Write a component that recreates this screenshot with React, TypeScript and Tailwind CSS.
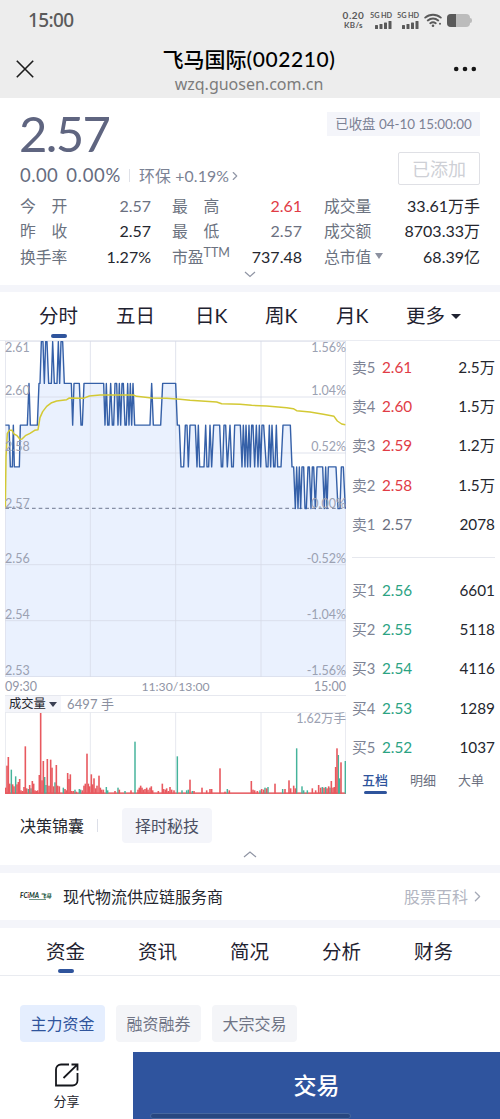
import React from 'react';
import { ChevronRight } from 'lucide-react';

// [x, level]: level 0 is the day's high (2.61), 4 is the previous close (2.57)
const PRICE: [number, number][] = [
  [16, 2], [27, 2], [31, 3], [37, 3], [40, 2], [43, 3], [58, 3], [61, 2], [82, 2], [87, 1], [91, 2], [112, 2], [117, 1], [120, 1],
  [124, 0], [129, 0], [133, 1], [137, 0], [141, 0], [146, 1], [154, 1], [158, 0], [163, 1], [171, 1], [175, 0], [179, 1], [183, 0],
  [188, 0], [193, 1], [214, 1], [218, 2], [222, 1], [238, 1], [243, 2], [247, 2], [252, 1], [311, 1], [315, 2], [319, 1], [323, 2],
  [327, 2], [332, 1], [337, 2], [341, 2], [345, 1], [350, 1], [354, 2], [358, 1], [362, 2], [366, 1], [370, 1], [375, 2], [379, 2],
  [383, 1], [387, 2], [391, 1], [395, 2], [399, 1], [404, 2], [450, 2], [455, 1], [460, 2], [482, 2], [488, 1], [527, 1], [532, 2],
  [538, 2], [543, 3], [551, 3], [556, 2], [561, 2], [565, 3], [570, 2], [586, 2], [591, 3], [595, 2], [599, 3], [612, 3], [617, 2],
  [621, 3], [626, 3], [630, 2], [635, 3], [641, 2], [659, 2], [664, 3], [668, 3], [672, 2], [677, 2], [682, 3], [690, 2], [695, 3],
  [700, 3], [704, 2], [721, 2], [726, 3], [730, 2], [735, 3], [738, 2], [743, 3], [747, 2], [751, 3], [755, 2], [759, 2], [764, 3],
  [769, 2], [774, 3], [778, 2], [782, 3], [786, 2], [791, 2], [799, 3], [804, 3], [808, 2], [812, 3], [816, 2], [821, 3], [825, 3],
  [829, 2], [833, 3], [843, 3], [849, 2], [871, 2], [876, 3], [881, 3], [886, 4], [890, 3], [894, 4], [898, 3], [902, 4], [906, 3],
  [911, 3], [915, 4], [919, 4], [924, 3], [928, 3], [933, 4], [937, 3], [941, 3], [946, 4], [951, 3], [968, 3], [973, 4], [977, 3],
  [981, 4], [985, 3], [1008, 3], [1014, 4], [1020, 4], [1024, 3], [1030, 3], [1036, 4],
];

const AVG: [number, number][] = [
  [16, 502], [18, 347], [22, 277], [28, 268], [36, 268], [42, 279], [50, 283], [60, 295], [66, 294], [76, 284], [90, 277],
  [104, 268], [114, 266], [120, 230], [128, 212], [140, 196], [155, 185], [170, 180], [200, 176], [208, 171], [250, 172],
  [268, 165], [300, 162], [400, 162], [410, 166], [455, 171], [500, 172], [540, 175], [570, 178], [650, 183], [665, 188],
  [720, 190], [755, 193], [800, 195], [860, 200], [880, 203], [890, 209], [930, 213], [970, 220], [1002, 226], [1012, 240],
  [1025, 249], [1036, 251],
];

const UP: [number, number][] = [
  [17, 18], [21, 84], [25, 110], [29, 30], [38, 28], [42, 22], [51, 28], [55, 35], [59, 44], [63, 10], [68, 8], [72, 20], [76, 142],
  [80, 16], [89, 26], [97, 38], [101, 30], [105, 10], [109, 8], [113, 10], [118, 56], [122, 242], [126, 40], [130, 98], [142, 104],
  [147, 24], [152, 102], [156, 78], [161, 22], [169, 86], [173, 24], [178, 22], [195, 14], [199, 10], [203, 62], [207, 44],
  [211, 58], [215, 8], [220, 8], [229, 6], [247, 10], [252, 24], [256, 30], [261, 120], [265, 30], [269, 22], [274, 58], [278, 28],
  [282, 46], [287, 16], [291, 24], [297, 54], [301, 18], [305, 12], [310, 12], [345, 8], [358, 12], [393, 10], [414, 12],
  [418, 18], [422, 24], [426, 18], [430, 12], [435, 14], [440, 18], [444, 12], [450, 18], [454, 22], [458, 10], [475, 8],
  [487, 30], [491, 14], [496, 12], [500, 16], [505, 8], [510, 20], [515, 12], [522, 10], [570, 42], [582, 8], [606, 18], [620, 10],
  [630, 14], [635, 14], [660, 76], [675, 6], [688, 10], [754, 38], [759, 12], [764, 10], [772, 8], [785, 14], [791, 12], [800, 16],
  [825, 30], [855, 14], [867, 40], [872, 16], [881, 24], [886, 16], [937, 16], [947, 10], [956, 26], [962, 18], [972, 18],
  [981, 16], [986, 22], [994, 38], [999, 18], [1003, 20], [1007, 80], [1011, 136], [1023, 94],
];

const DOWN: [number, number][] = [
  [34, 72], [47, 52], [85, 14], [93, 16], [134, 50], [138, 26], [165, 34], [190, 18], [225, 12], [238, 14], [242, 12], [319, 20],
  [323, 10], [354, 18], [375, 8], [405, 156], [532, 112], [546, 10], [560, 10], [565, 12], [577, 8], [682, 14], [780, 10],
  [795, 18], [804, 20], [848, 14], [890, 136], [906, 22], [911, 10], [922, 10], [967, 20], [977, 20], [990, 18], [1015, 116],
  [1019, 46], [1036, 98],
];

const pricePath = PRICE.map(([x, l]) => `${x},${2 + l * 125.2}`).join(' ');
const avgPath = AVG.map(([x, y]) => `${x},${y}`).join(' ');

const STATS = [
  ['今　开', '2.57', 'text-[#6b7080]', '最　高', '2.61', 'text-[#e13c46]', '成交量', '33.61万手'],
  ['昨　收', '2.57', 'text-[#24262e]', '最　低', '2.57', 'text-[#6b7080]', '成交额', '8703.33万'],
  ['换手率', '1.27%', 'text-[#24262e]', '市盈', '737.48', 'text-[#24262e]', '总市值', '68.39亿'],
];

const SELL = [['卖5', '2.61', '2.5万'], ['卖4', '2.60', '1.5万'], ['卖3', '2.59', '1.2万'], ['卖2', '2.58', '1.5万'], ['卖1', '2.57', '2078']];
const BUY = [['买1', '2.56', '6601'], ['买2', '2.55', '5118'], ['买3', '2.54', '4116'], ['买4', '2.53', '1289'], ['买5', '2.52', '1037']];

const Signal: React.FC = () => (
  <div className="flex w-[23px] flex-col items-end">
    <span className="mb-px text-[7.3px] leading-[9px] font-bold tracking-[-0.1px] whitespace-nowrap">5G HD</span>
    <svg width="17" height="8" viewBox="0 0 17 8" fill="#5a5a5a">
      <rect x="0" y="4" width="3" height="4" rx=".6" />
      <rect x="4.5" y="3" width="3" height="5" rx=".6" />
      <rect x="9" y="1.5" width="3" height="6.5" rx=".6" />
      <rect x="13.5" y="0" width="3" height="8" rx=".6" />
    </svg>
  </div>
);

const StatusBar: React.FC = () => (
  <div className="flex h-[40px] items-center justify-between pr-[28px] pl-[28px] text-[#5a5a5a]">
    <span className="font-['Noto_Sans'] text-[19px] leading-[38px] font-medium tracking-[-0.6px]">15:00</span>
    <div className="flex items-center">
      <div className="mr-[4px] flex w-[23px] flex-col items-center font-bold">
        <span className="text-[10px] leading-[11px] tracking-[0.5px]">0.20</span>
        <span className="text-[8px] leading-[9px] tracking-[0.3px]">KB/s</span>
      </div>
      <Signal />
      <div className="w-[4px]" />
      <Signal />
      <svg className="ml-[5px]" width="18" height="15" viewBox="0 0 18 15" fill="none" stroke="#5a5a5a" strokeWidth="1.9" strokeLinecap="round">
        <path d="M1.2 4.6C5.6.7 12.4.7 16.8 4.6M3.8 7.5c3-2.6 7.4-2.6 10.4 0M6.3 10.2c1.6-1.2 3.8-1.2 5.4 0" />
        <circle cx="9" cy="12.8" r="1.3" fill="#5a5a5a" stroke="none" />
        <circle cx="16" cy="10.8" r="1" fill="#5a5a5a" stroke="none" />
      </svg>
      <div className="ml-[5px] flex items-center">
        <div className="h-[13px] w-[23px] overflow-hidden rounded-[4px] bg-[#bcbcbc]">
          <div className="h-full w-[9px] bg-[#5a5a5a]" />
        </div>
        <div className="h-[5px] w-[2px] rounded-r-full bg-[#bcbcbc]" />
      </div>
    </div>
  </div>
);

const Stats: React.FC = () => (
  <div className="flex flex-col text-[16px]">
    {STATS.map(([a, av, ac, b, bv, bc, c, cv]) => (
      <div key={a} className="flex h-[25.3px] items-center leading-[25px] text-[#6b7280]">
        <span className="w-[60px] text-[15.8px] whitespace-nowrap">{a}</span>
        <span className={`w-[71px] text-right ${ac}`}>{av}</span>
        <span className="ml-[21px] flex w-[66px] text-[15.8px] whitespace-nowrap">
          {b}
          {b === '市盈' && <span className="-mt-[4px] text-[12.5px]">TTM</span>}
        </span>
        <span className={`w-[64px] text-right ${bc}`}>{bv}</span>
        <span className="ml-[22px] flex items-center text-[15.8px] whitespace-nowrap">
          {c}
          {c === '总市值' && <span className="ml-[4px] border-x-[4.5px] border-t-[6px] border-x-transparent border-t-[#8c91a0]" />}
        </span>
        <span className="flex-1 text-right whitespace-nowrap text-[#24262e]">{cv}</span>
      </div>
    ))}
  </div>
);

const AxisLabels: React.FC = () => (
  <div className="absolute inset-0 text-[12.5px] leading-[14px] text-[#9ba1b2]">
    <div className="absolute top-0 left-0 h-full">
      <span className="absolute top-[0px]">2.61</span>
      <span className="absolute top-[43px]">2.60</span>
      <span className="absolute top-[99px]">2.58</span>
      <span className="absolute top-[156px]">2.57</span>
      <span className="absolute top-[211px]">2.56</span>
      <span className="absolute top-[267px]">2.54</span>
      <span className="absolute top-[323px]">2.53</span>
    </div>
    <div className="absolute top-0 right-0 h-full">
      <span className="absolute top-[0px] right-0">1.56%</span>
      <span className="absolute top-[43px] right-0">1.04%</span>
      <span className="absolute top-[99px] right-0">0.52%</span>
      <span className="absolute top-[156px] right-0">0.00%</span>
      <span className="absolute top-[211px] right-0">-0.52%</span>
      <span className="absolute top-[267px] right-0">-1.04%</span>
      <span className="absolute top-[323px] right-0">-1.56%</span>
    </div>
  </div>
);

const PriceChart: React.FC = () => (
  <div className="relative h-[336px] w-[341px]">
    <svg width="341" height="336" viewBox="15 0 1023 1008" fill="none">
      <polygon points={`16,1008 ${pricePath} 1037,1008`} fill="#eaf1fe" />
      <g stroke="#d5dae7" strokeWidth="3">
        {[1, 168, 336, 671, 839, 1007].map(y => <path key={y} d={`M15 ${y}H1038`} opacity=".75" />)}
        {[16, 271, 527, 783, 1037].map(x => <path key={x} d={`M${x} 0V1008`} opacity=".75" />)}
      </g>
      <path d="M16 502H1038" stroke="#8790a6" strokeWidth="3.4" strokeDasharray="11 9" />
      <polyline points={pricePath} stroke="#3560a8" strokeWidth="4.2" strokeLinejoin="round" />
      <polyline points={avgPath} stroke="#d3c934" strokeWidth="4.5" strokeLinejoin="round" />
    </svg>
    <AxisLabels />
  </div>
);

const VolumeChart: React.FC = () => (
  <div className="relative h-[82px] w-[341px]">
    <svg width="341" height="82" viewBox="15 0 1023 246">
      <g stroke="#e6e8ef" strokeWidth="3">
        <path d="M15 1H1038M16 0V246M271 0V246M527 0V246M783 0V246M1037 0V246" />
      </g>
      <rect x="15" y="241" width="1023" height="5" fill="#e8686d" />
      {DOWN.map(([x, h]) => <rect key={x} x={x - 2.2} y={245 - h} width="4.4" height={h} fill="#45b39b" />)}
      {UP.map(([x, h]) => <rect key={x} x={x - 2.4} y={245 - h} width="4.8" height={h} fill="#e8595f" />)}
    </svg>
    <span className="absolute top-0 right-0 text-[12.5px] leading-[13px] text-[#9ba1b2]">1.62万手</span>
  </div>
);

const BookRow: React.FC<{ row: string[], color: string }> = ({ row, color }) => (
  <div className="flex h-[39.4px] items-center text-[15.3px] leading-[24px]">
    <span className="w-[30px] text-[14.8px] whitespace-nowrap text-[#7d8394]">{row[0]}</span>
    <span className={color}>{row[1]}</span>
    <span className="flex-1 text-right text-[#24262e]">{row[2]}</span>
  </div>
);

const OrderBook: React.FC = () => (
  <div className="ml-[5px] flex w-[143px] flex-col pt-[6px]">
    {SELL.map(r => <BookRow key={r[0]} row={r} color={r[1] === '2.57' ? 'text-[#6b7080]' : 'text-[#e13c46]'} />)}
    <div className="mt-[13px] mb-[12px] h-px bg-[#e6e8ee]" />
    {BUY.map(r => <BookRow key={r[0]} row={r} color="text-[#2ba383]" />)}
    <div className="mt-[1px] flex text-[13px] leading-[24px] text-[#6b7080]">
      <div className="ml-[10px] flex w-[48px] flex-col items-start">
        <span className="font-medium text-[#2f549c]">五档</span>
        <span className="-mt-px ml-[2px] h-[3px] w-[23px] rounded-full bg-[#2f549c]" />
      </div>
      <span className="w-[48px]">明细</span>
      <span>大单</span>
    </div>
  </div>
);

const App: React.FC = () => (
  <div className="flex h-[1119px] w-[500px] flex-col overflow-hidden bg-white font-[Lato,'Noto_Sans_CJK_SC',sans-serif]">
    <header className="h-[98px] shrink-0 bg-[#ededed]">
      <StatusBar />
      <div className="flex h-[58px] justify-between pr-[23px] pl-[16px]">
        <svg className="mt-[20px]" width="18" height="18" viewBox="0 0 18 18" stroke="#1c1c1c" strokeWidth="1.6">
          <path d="M.8.8l16.4 16.4M17.2.8L.8 17.2" />
        </svg>
        <div className="flex flex-col items-center pl-[11px]">
          <span className="mt-[3px] text-[21px] leading-[31px] font-medium whitespace-nowrap text-black">
            飞马国际<span className="tracking-[0.6px]">(002210)</span>
          </span>
          <span className="font-['Noto_Sans'] text-[16px] leading-[21px] text-[#7c7c7c]">wzq.guosen.com.cn</span>
        </div>
        <svg className="mt-[26px]" width="24" height="6" viewBox="0 0 24 6" fill="#151515">
          <circle cx="3.2" cy="3" r="2.3" />
          <circle cx="12" cy="3" r="2.3" />
          <circle cx="20.8" cy="3" r="2.3" />
        </svg>
      </div>
    </header>

    <section className="h-[187px] shrink-0 px-[20px]">
      <div className="flex h-[90px] justify-between">
        <div>
          <div className="mt-[7px] mb-[1px] -ml-[1px] text-[49px] leading-[56px] tracking-[-1.6px] text-[#5f6580]">2.57</div>
          <div className="flex items-center text-[18.5px] leading-[27px] whitespace-nowrap text-[#666c80]">
            <span className="tracking-[0.4px]">0.00</span>
            <span className="ml-[8px] tracking-[0.7px]">0.00%</span>
            <span className="mr-[9px] ml-[8px] h-[13px] w-px bg-[#dfe1e8]" />
            <span className="text-[15.8px] tracking-[0.15px] text-[#7b8294]">环保 +0.19%</span>
            <ChevronRight size={14} strokeWidth={2} className="-ml-px text-[#9298a8]" />
          </div>
        </div>
        <div className="flex flex-col items-end">
          <div className="mt-[14px] flex h-[24px] w-[153px] items-center justify-center bg-[#f4f5fa] text-[13.4px] whitespace-nowrap text-[#7b8194]">已收盘 04-10 15:00:00</div>
          <div className="mt-[16px] flex h-[33px] w-[82px] shrink-0 items-center justify-center rounded-[2px] border border-[#dfe0e5] text-[18px] leading-[26px] text-[#ced0d6]">已添加</div>
        </div>
      </div>
      <div className="mt-[5px]"><Stats /></div>
      <svg className="mx-auto mt-[2px]" width="12" height="7" viewBox="0 0 12 7" fill="none" stroke="#9095a4" strokeWidth="1.2">
        <path d="M1 1l5 4.500L11 1" />
      </svg>
    </section>

    <div className="h-[7px] shrink-0 bg-[#f4f5fa]" />

    <nav className="flex h-[49px] shrink-0 border-b border-[#eaecf2] pl-[39px] text-[19.5px] leading-[48px] text-[#1f2230]">
      <div className="flex w-[77px] flex-col">
        <span className="h-[42px]">分时</span>
        <span className="ml-[12px] h-[4px] w-[16px] shrink-0 rounded-full bg-[#2f549c]" />
      </div>
      <span className="w-[79px]">五日</span>
      <span className="w-[70px]">日K</span>
      <span className="w-[71px]">周K</span>
      <span className="w-[70px]">月K</span>
      <span className="flex items-center">
        更多
        <span className="ml-[6px] border-x-[5px] border-t-[5px] border-x-transparent border-t-[#1f2230]" />
      </span>
    </nav>

    <main className="flex h-[456px] shrink-0 pl-[5px]">
      <div className="mr-px w-[341px]">
        <PriceChart />
        <div className="relative flex h-[18px] justify-between text-[12.5px] leading-[19px] text-[#9095a6]">
          <span>09:30</span>
          <span className="absolute left-1/2 -translate-x-1/2 text-[12.2px]">11:30/13:00</span>
          <span>15:00</span>
        </div>
        <div className="flex h-[17px] items-center border-t border-[#e6e8ef] text-[13px] leading-[16px]">
          <span className="flex h-full w-[56px] items-center bg-[#f4f5fa] pl-[4px] text-[12.3px] text-[#24262e]">
            成交量
            <span className="ml-[3px] border-x-[4px] border-t-[5px] border-x-transparent border-t-[#3a3f52]" />
          </span>
          <span className="ml-[6px] tracking-[0.1px] text-[#8b90a0]">6497 手</span>
        </div>
        <VolumeChart />
      </div>
      <OrderBook />
    </main>

    <section className="h-[68px] shrink-0">
      <div className="flex h-[46px] items-end pl-[20px]">
        <span className="text-[16px] leading-[35px] text-[#24262e]">决策锦囊</span>
        <span className="mb-[11px] ml-[13px] h-[13px] w-px bg-[#dcdfe8]" />
        <span className="ml-[24px] flex h-[35px] w-[90px] items-center justify-center rounded-[4px] bg-[#f4f5fa] text-[16px] text-[#4b5064]">择时秘技</span>
      </div>
      <svg className="mx-auto mt-[8px]" width="14" height="7" viewBox="0 0 14 7" fill="none" stroke="#9095a4" strokeWidth="1.2">
        <path d="M1 6l6-5 6 5" />
      </svg>
    </section>

    <div className="h-[8px] shrink-0 bg-[#f4f5fa]" />

    <section className="flex h-[47px] shrink-0 items-center pr-[14px] pl-[20px] text-[16px]">
      <div className="flex w-[43px] flex-col">
        <div className="flex items-end text-[6.5px] leading-[6px] font-black italic whitespace-nowrap">
          <span className="text-[#26352f]">FC</span><span className="text-[#b23a3a]">i</span><span className="text-[#1d4a3a]">MA</span>
          <span className="ml-[1px] text-[5.5px] text-[#1c5a44]">飞马</span>
        </div>
        <div className="ml-[9px] h-[1px] w-[17px] bg-[#6f9384]" />
      </div>
      <span className="text-[#24262e]">现代物流供应链服务商</span>
      <span className="ml-auto text-[#b3b6c2]">股票百科</span>
      <ChevronRight size={17} strokeWidth={1.8} className="ml-[1px] text-[#a5a9b6]" />
    </section>

    <div className="h-[8px] shrink-0 bg-[#f4f5fa]" />

    <nav className="flex h-[48px] shrink-0 border-b border-[#e9ebf0] pl-[46px] text-[19.5px] leading-[48px] text-[#1f2230]">
      <div className="flex w-[92px] flex-col">
        <span className="h-[41px]">资金</span>
        <span className="ml-[12px] h-[4px] w-[16px] shrink-0 rounded-[2px] bg-[#2f549c]" />
      </div>
      <span className="w-[92px]">资讯</span>
      <span className="w-[92px]">简况</span>
      <span className="w-[92px]">分析</span>
      <span>财务</span>
    </nav>

    <section className="flex h-[76px] shrink-0 gap-[11px] pt-[29px] pl-[20px] text-[16px] text-[#6f7485]">
      <span className="flex h-[37px] w-[85px] items-center justify-center rounded-[4px] bg-[#e5eefe] text-[#2f549c]">主力资金</span>
      <span className="flex h-[37px] w-[85px] items-center justify-center rounded-[4px] bg-[#f4f5f8]">融资融券</span>
      <span className="flex h-[37px] w-[85px] items-center justify-center rounded-[4px] bg-[#f4f5f8]">大宗交易</span>
    </section>

    <footer className="flex h-[67px] shrink-0">
      <div className="flex w-[133px] flex-col items-center pt-[11px] text-[#24262e]">
        <svg width="24" height="24" viewBox="0 0 24 24" fill="none" stroke="#15171c" strokeWidth="1.8">
          <path d="M14 1.5H6A5 5 0 0 0 1 6.500V22.500H17.500A5 5 0 0 0 22.500 17.500V10" />
          <path d="M8.500 15L22 1.800M16.500 1.500H22.500V7.500" />
        </svg>
        <span className="mt-[5px] text-[13px] leading-[18px]">分享</span>
      </div>
      <div className="relative flex flex-1 items-center justify-center bg-[#2f549e] text-[23px] font-medium text-white">
        交易
        <div className="absolute bottom-0 left-[17px] h-[6px] w-[201px] rounded-full border border-[#46679f] bg-[#284780]" />
      </div>
    </footer>
  </div>
);

export default App;
